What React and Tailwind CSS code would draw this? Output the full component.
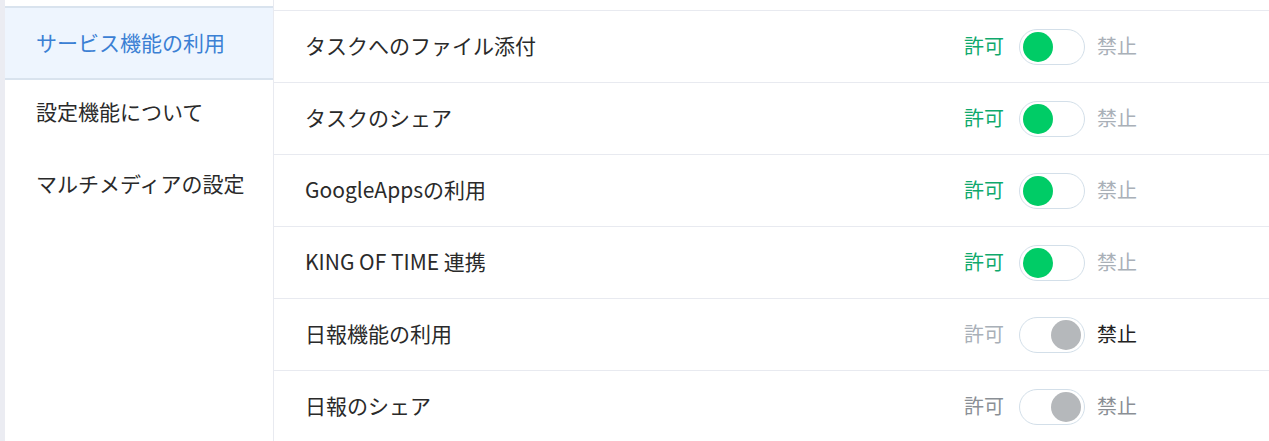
import React, { useState } from 'react';

const menu = ["サービス機能の利用", "設定機能について", "マルチメディアの設定"];

const initialRows = [
  { label: "タスクへのファイル添付", on: true },
  { label: "タスクのシェア", on: true },
  { label: "GoogleAppsの利用", on: true },
  { label: "KING OF TIME 連携", on: true },
  { label: "日報機能の利用", on: false },
  { label: "日報のシェア", on: false, disabled: true },
];

const Toggle = ({ on, disabled, onClick }) => (
  <button
    type="button"
    onClick={onClick}
    disabled={disabled}
    className="w-[66px] h-[36px] rounded-full border border-[#d3dfe9] bg-white flex items-center px-[3px] shrink-0"
  >
    <span
      className={
        on
          ? "w-[30px] h-[30px] rounded-full bg-[#00cc66]"
          : "w-[30px] h-[30px] rounded-full bg-[#b5b8bb] ml-auto"
      }
    />
  </button>
);

const App = () => {
  const [active, setActive] = useState(0);
  const [rows, setRows] = useState(initialRows);

  const flip = (i) => {
    setRows(rows.map((r, idx) => (idx === i ? { ...r, on: !r.on } : r)));
  };

  return (
    <main
      className="h-[441px] w-full flex overflow-hidden bg-white text-[#2a2a2a]"
      style={{ fontFamily: '"Noto Sans CJK JP", "Noto Sans", sans-serif' }}
    >
      {/* left strip */}
      <div className="w-[5px] bg-[#ebecf2] shrink-0" />

      {/* sidebar */}
      <nav className="w-[269px] shrink-0 border-r border-[#e8eaf0] pt-[6px]">
        {menu.map((m, i) => (
          <div
            key={m}
            onClick={() => setActive(i)}
            className={
              i === active
                ? "h-[74px] flex items-center pl-[31px] text-[21px] leading-none pb-[2px] bg-[#eef5fe] border-y-2 border-[#d9e3ee] text-[#3b80d4] cursor-pointer"
                : "h-[72px] flex items-center pl-[31px] text-[21px] leading-none pb-[10px] text-[#2a2a2a] cursor-pointer"
            }
          >
            {m}
          </div>
        ))}
      </nav>

      {/* content */}
      <section className="flex-1 pt-[10px]">
        {rows.map((r, i) => (
          <div
            key={r.label}
            className="h-[72px] border-t border-[#e8eaf0] flex items-center pl-[31px] pr-[132px]"
          >
            <span className="text-[21px] leading-none pb-[3px]">{r.label}</span>
            <div className="ml-auto flex items-center text-[20px] leading-none">
              <span
                className={
                  r.disabled
                    ? "text-[#8a8f95] mr-[15px] pb-[2px]"
                    : r.on
                    ? "text-[#0fa96c] mr-[15px] pb-[2px]"
                    : "text-[#a9b0b8] mr-[15px] pb-[2px]"
                }
              >
                許可
              </span>
              <Toggle on={r.on} disabled={r.disabled} onClick={() => flip(i)} />
              <span
                className={
                  r.disabled
                    ? "text-[#8a8f95] ml-[12px] pb-[2px]"
                    : r.on
                    ? "text-[#a9b0b8] ml-[12px] pb-[2px]"
                    : "text-[#222] ml-[12px] pb-[2px]"
                }
              >
                禁止
              </span>
            </div>
          </div>
        ))}
      </section>
    </main>
  );
};

export default App;
